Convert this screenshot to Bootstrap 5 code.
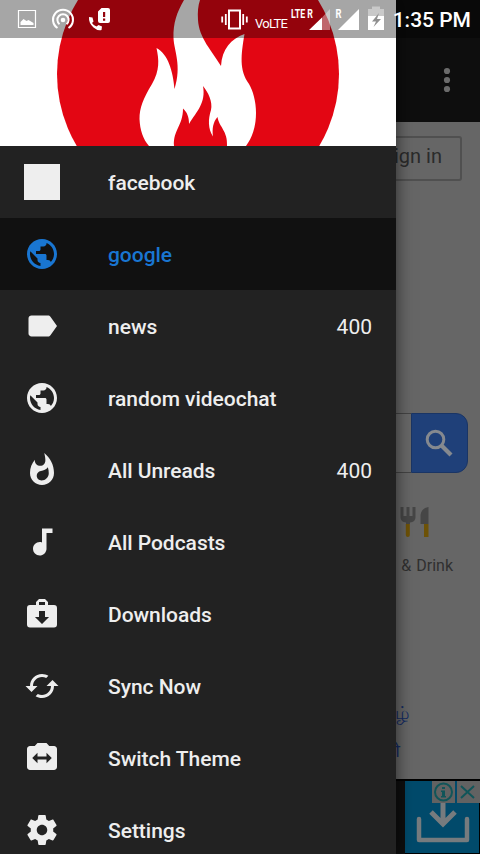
<!DOCTYPE html>
<html lang="en">
<head>
<meta charset="utf-8">
<meta name="viewport" content="width=device-width, initial-scale=1">
<title>Feed reader</title>
<link href="https://cdn.jsdelivr.net/npm/bootstrap@5.3.0/dist/css/bootstrap.min.css" rel="stylesheet">
<style>
  body { font-family: Roboto, "Noto Sans", sans-serif; background: #000; }
  .phone { width: 480px; height: 854px; background: #666; color: #2b2b2b; }
  .status { height: 38px; width: 480px; background: rgba(0,0,0,.35); z-index: 3; }
  .clock { font-size: 21px; font-weight: 500; line-height: 38px; color: #fff; right: 9px; top: 1px; }
  .appbar { height: 122px; background: #0e0e0e; padding: 38px 21px 0 0; }
  .dots { width: 24px; height: 36px; }
  .sign-row { padding: 14px 18px 0 0; }
  .sign { width: 104px; height: 45px; border: 2px solid #505050; border-radius: 3px; font-size: 20px; padding: 0 18px 6px 0; }
  .search { margin-top: 232px; height: 60px; padding: 0 12px 0 12px; }
  .search-field { border: 1px solid #444; border-right: 0; background: #686868; }
  .search-btn { width: 57px; background: #1f4079; border: 1px solid #1a3565; border-radius: 0 12px 12px 0; padding-right: 2px; }
  .food { width: 122px; margin-top: 33px; margin-right: 5px; font-size: 16px; color: #303030; }
  .food svg { margin-left: 47px; }
  .food-label { line-height: 20px; margin-top: 18px; padding-right: 22px; word-spacing: 1px; }
  .langs { margin-top: 118px; color: #142b62; font-size: 18px; line-height: 37px; padding-right: 71px; }
  .langs .second { padding-right: 9px; padding-top: 1px; }
  .ad { height: 75px; background: #0e0e0e; border-top: 2px solid #000; }
  .ad-tile { width: 75px; height: 73px; background: #014a6b; border-right: 1px solid #000; border-bottom: 1px solid #000; }
  .drawer { width: 396px; height: 854px; background: #222; z-index: 2; box-shadow: 0 0 16px rgba(0,0,0,.6); }
  .hero { height: 146px; background: #fff; flex: none; }
  .entry { height: 72px; padding: 0 24px; color: #eee; font-size: 21px; flex: none; }
  .entry .name { font-weight: 500; margin-left: 48px; padding-top: 3px; letter-spacing: -.03px; }
  .entry .count { padding-top: 3px; }
  .entry.current { background: #111; color: #1976d2; }
  .entry svg { width: 36px; height: 36px; fill: currentColor; flex: none; }
  .blank-icon { width: 36px; height: 36px; background: #eee; flex: none; }
</style>
</head>
<body class="overflow-hidden">
<div class="phone position-relative overflow-hidden">

  <!-- page under the drawer -->
  <main class="d-flex flex-column h-100">
    <div class="appbar d-flex justify-content-end align-items-center">
      <svg class="dots" viewBox="0 0 24 36"><g fill="#6b6b6b"><circle cx="12" cy="9" r="3.1"/><circle cx="12" cy="18" r="3.1"/><circle cx="12" cy="27" r="3.1"/></g></svg>
    </div>
    <div class="sign-row d-flex justify-content-end">
      <div class="sign d-flex align-items-center justify-content-end text-nowrap">Sign in</div>
    </div>
    <div class="search d-flex">
      <div class="search-field flex-grow-1"></div>
      <div class="search-btn d-flex align-items-center justify-content-center">
        <svg width="30" height="30" viewBox="0 0 30 30" fill="none" stroke="#85898f"><circle cx="11.500" cy="11.500" r="8.300" stroke-width="3"/><path d="M17.500 17.500L27 27" stroke-width="4.200"/></svg>
      </div>
    </div>
    <div class="food ms-auto">
      <svg class="d-block" width="32" height="32" viewBox="0 0 32 32">
        <path d="M0 1h3v9h3V1h3v9h3V1h3v10q0 5-5.500 5.500V18h-4v-1.500Q0 16 0 11zM20 18V9q1-7 8-8v17z" fill="#464646" transform="translate(.5)"/>
        <path d="M5.800 18h4v11a2 2 0 0 1-4 0zM24 18h4.500v13H24z" fill="#6d5207"/>
      </svg>
      <div class="food-label text-end text-nowrap">Food &amp; Drink</div>
    </div>
    <div class="langs text-end text-nowrap"><div>தமிழ்</div><div class="second">मराठी</div></div>
    <div class="ad d-flex justify-content-end mt-auto flex-shrink-0">
      <div class="ad-tile">
        <svg class="d-block" width="75" height="73" viewBox="0 0 75 73">
          <path d="M14 38v21h48V38" fill="none" stroke="#767b7e" stroke-width="4.500" stroke-linejoin="round" stroke-linecap="round"/>
          <path d="M38 18v24M26 31l12 12 12-12" fill="none" stroke="#767b7e" stroke-width="5"/>
          <path d="M27 0h23v22H27zM52 0h23v22H52z" fill="#626262"/>
          <g fill="none" stroke="#115559" stroke-width="2"><circle cx="38.500" cy="11" r="8.500"/><path d="M56 5l13 12M69 5L56 17"/></g>
          <path d="M37 6h3v2h-3zM36 9.500h4V15h1v1.500h-5V15h1v-4h-1z" fill="#115559"/>
        </svg>
      </div>
    </div>
  </main>

  <!-- navigation drawer -->
  <nav class="drawer d-flex flex-column position-absolute top-0 start-0">
    <div class="hero">
      <svg class="d-block" width="396" height="146" viewBox="0 0 396 146">
        <circle cx="198" cy="74" r="141" fill="#e30613"/>
        <path fill="#fff" d="M184 0C177 12 173 23 173.500 38C174 51 182 65 174.500 89C173 71 168 54 156.500 48C159 60 160 70 152 84C143 99 139.500 108 139.500 119C140 130 143 139 149 146H246C252 138 256 127 256 113C256 101 253 91 249 84C239 70 241 55 244.500 34C231 39 222 49 221 66C212 51 199 38 198 20C197.500 12 198 6 200 0Z"/>
        <path fill="#e30613" d="M174 146C173 130 183 126 183 108.500C187 112 189 117 189 124C197 111 206 103 203 86C208 92 213 102 211 110C208 119 208 129 213 136.500C212 129 213 122 217.500 117C219 127 228 131 227 146Z"/>
      </svg>
    </div>
    <div class="entry d-flex align-items-center"><div class="blank-icon"></div><span class="name">facebook</span></div>
    <div class="entry current d-flex align-items-center">
      <svg viewBox="0 0 24 24"><path id="globe" d="M12 2C6.480 2 2 6.480 2 12s4.480 10 10 10 10-4.480 10-10S17.520 2 12 2zm-1 17.930c-3.950-.49-7-3.850-7-7.930 0-.62.08-1.210.21-1.790L9 15v1c0 1.100.9 2 2 2v1.930zm6.900-2.540c-.26-.81-1-1.390-1.900-1.390h-1v-3c0-.55-.45-1-1-1H8v-2h2c.55 0 1-.45 1-1V7h2c1.100 0 2-.9 2-2v-.41c2.930 1.190 5 4.060 5 7.410 0 2.080-.8 3.970-2.100 5.390z"/></svg>
      <span class="name">google</span></div>
    <div class="entry d-flex align-items-center">
      <svg viewBox="0 0 24 24"><path d="M17.630 5.840C17.270 5.330 16.670 5 16 5L5 5.010C3.900 5.010 3 5.900 3 7v10c0 1.100.9 1.990 2 1.990L16 19c.67 0 1.270-.33 1.630-.84L22 12l-4.370-6.160z"/></svg>
      <span class="name">news</span><span class="count ms-auto">400</span></div>
    <div class="entry d-flex align-items-center">
      <svg viewBox="0 0 24 24"><use href="#globe"/></svg>
      <span class="name">random videochat</span></div>
    <div class="entry d-flex align-items-center">
      <svg viewBox="0 0 24 24"><path d="M13.500.67s.74 2.650.74 4.800c0 2.060-1.350 3.730-3.410 3.730-2.070 0-3.630-1.670-3.630-3.730l.03-.36C5.210 7.510 4 10.620 4 14c0 4.420 3.580 8 8 8s8-3.580 8-8C20 8.610 17.410 3.800 13.500.67zM11.710 19c-1.780 0-3.220-1.400-3.220-3.140 0-1.620 1.050-2.760 2.810-3.120 1.770-.36 3.600-1.210 4.620-2.580.39 1.290.59 2.650.59 4.040 0 2.650-2.150 4.800-4.800 4.800z"/></svg>
      <span class="name">All Unreads</span><span class="count ms-auto">400</span></div>
    <div class="entry d-flex align-items-center">
      <svg viewBox="0 0 24 24"><path d="M12 3v9.280c-.47-.17-.97-.28-1.500-.28C8.010 12 6 14.010 6 16.500S8.010 21 10.500 21c2.310 0 4.200-1.750 4.450-4H15V6h4V3h-7z"/></svg>
      <span class="name">All Podcasts</span></div>
    <div class="entry d-flex align-items-center">
      <svg viewBox="0 0 24 24"><path fill-rule="evenodd" d="M4 6h4V4l2-2h4l2 2v2h4a2 2 0 0 1 2 2v11a2 2 0 0 1-2 2H4a2 2 0 0 1-2-2V8a2 2 0 0 1 2-2zM10 4v2h4V4zM10 10v4H7.300l4.700 4.700 4.700-4.700H14v-4z"/></svg>
      <span class="name">Downloads</span></div>
    <div class="entry d-flex align-items-center">
      <svg viewBox="0 0 24 24"><path d="M19 8l-4 4h3c0 3.310-2.690 6-6 6-1.010 0-1.970-.25-2.800-.7l-1.460 1.460C8.970 19.540 10.430 20 12 20c4.420 0 8-3.580 8-8h3l-4-4zM6 12c0-3.310 2.690-6 6-6 1.010 0 1.970.25 2.800.7l1.460-1.460C15.030 4.460 13.570 4 12 4c-4.420 0-8 3.580-8 8H1l4 4 4-4H6z"/></svg>
      <span class="name">Sync Now</span></div>
    <div class="entry d-flex align-items-center">
      <svg viewBox="0 0 24 24"><path d="M20 4h-3.170L15 2H9L7.170 4H4c-1.100 0-2 .9-2 2v12c0 1.100.9 2 2 2h16c1.100 0 2-.9 2-2V6c0-1.100-.9-2-2-2zm-5 11.500V13H9v2.500L5.500 12 9 8.500V11h6V8.500l3.500 3.500-3.500 3.500z"/></svg>
      <span class="name">Switch Theme</span></div>
    <div class="entry d-flex align-items-center">
      <svg viewBox="0 0 24 24"><path d="M19.430 12.980c.04-.32.07-.64.07-.98s-.03-.66-.07-.98l2.110-1.650c.19-.15.24-.42.12-.64l-2-3.460c-.12-.22-.39-.3-.61-.22l-2.490 1c-.52-.4-1.080-.73-1.690-.98l-.38-2.650C14.460 2.180 14.250 2 14 2h-4c-.25 0-.46.18-.49.42l-.38 2.650c-.61.25-1.170.59-1.690.98l-2.490-1c-.23-.09-.49 0-.61.22l-2 3.460c-.13.22-.07.49.12.64l2.110 1.650c-.04.32-.07.65-.07.98s.03.66.07.98l-2.110 1.650c-.19.15-.24.42-.12.64l2 3.460c.12.22.39.3.61.22l2.490-1c.52.4 1.080.73 1.690.98l.38 2.650c.03.24.24.42.49.42h4c.25 0 .46-.18.49-.42l.38-2.650c.61-.25 1.170-.59 1.690-.98l2.490 1c.23.09.49 0 .61-.22l2-3.460c.12-.22.07-.49-.12-.64l-2.110-1.650zM12 15.500c-1.930 0-3.500-1.570-3.500-3.500s1.570-3.500 3.500-3.500 3.500 1.570 3.500 3.500-1.570 3.500-3.500 3.500z"/></svg>
      <span class="name">Settings</span></div>
  </nav>

  <!-- system status bar -->
  <header class="status position-absolute top-0 start-0">
    <svg class="d-block" width="390" height="38" viewBox="0 0 390 38">
      <g fill="none" stroke="#fff">
        <path d="M18.500 10.500h17v17h-17z" stroke-width="1.200"/>
        <path d="M57.500 28a10 10 0 1 1 11 0" stroke-width="2"/>
        <path d="M59.500 24.200a5.600 5.600 0 1 1 7 0" stroke-width="2"/>
        <path d="M229 10.500h11v18h-11z" stroke-width="2"/>
        <path d="M225.800 14v11M243.200 14v11M222.200 16.500v6M246.800 16.500v6" stroke-width="1.800"/>
      </g>
      <g fill="#fff">
        <path d="M20.500 25v-3l3-3 3 2 2-1 5 3v2z"/>
        <circle cx="63" cy="20" r="2.300"/>
        <path d="M89 17l3.500.5 1 4-1.500 1.500q2 3 4.500 3.500l2-1.500 3.500 1.500-.5 3.500q-4 1-8-2.500-5-4.500-4.500-10.500z"/>
        <path fill-rule="evenodd" d="M101.500 8h6.500a2 2 0 0 1 2 2v11a2 2 0 0 1-2 2h-8a2 2 0 0 1-2-2v-9.500zM103 12v5h2.200v-5zM103 18.500v2.200h2.200v-2.200z"/>
        <path d="M309 30l13-12.500V30zM338 30l21-21v21z"/>
        <path fill-opacity=".4" d="M322 17.500L330 9v21h-8z"/>
        <path fill-opacity=".4" d="M368 16V9h4V6.500h8V9h4v7z"/>
        <path d="M368 16h16v14h-16z"/>
        <path fill="#8f8f8f" d="M379 13l-7 8.500h4L373.500 27l7.500-8h-4z"/>
        <text x="255" y="28" font-size="13" textLength="33">VoLTE</text>
        <text x="291" y="17.500" font-family="Roboto" font-weight="700" font-size="12" textLength="22" lengthAdjust="spacingAndGlyphs">LTE R</text>
        <text x="335.500" y="17.500" font-family="Roboto" font-weight="700" font-size="12" textLength="6" lengthAdjust="spacingAndGlyphs">R</text>
      </g>
    </svg>
    <div class="clock position-absolute text-nowrap">1:35 PM</div>
  </header>
</div>
<script src="https://cdn.jsdelivr.net/npm/bootstrap@5.3.0/dist/js/bootstrap.bundle.min.js"></script>
</body>
</html>
